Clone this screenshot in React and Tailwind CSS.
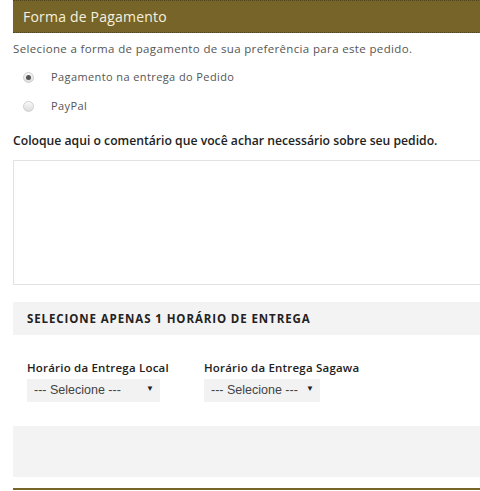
import { useState } from "react";

const Select = ({ width }) => (
  <div className="relative" style={{ width }}>
    <select
      className="w-full h-[23px] bg-[#f2f2f2] text-[12.5px] text-[#444] pl-[7px] appearance-none outline-none"
      style={{ fontFamily: "'Liberation Sans', sans-serif" }}
    >
      <option>--- Selecione ---</option>
    </select>
    <span className="absolute right-[6px] top-[6px] text-[8px] text-[#222] pointer-events-none">
      ▼
    </span>
  </div>
);

const Radio = ({ checked, onChange, label }) => (
  <label className="flex items-center gap-[17px] h-[16px] cursor-pointer">
    <input type="radio" name="pay" checked={checked} onChange={onChange} className="hidden" />
    <span className="w-[11px] h-[11px] rounded-full border border-[#d0d0d0] bg-gradient-to-b from-[#fafafa] to-[#dcdcdc] flex items-center justify-center">
      {checked && <span className="w-[5px] h-[5px] rounded-full bg-[#555]" />}
    </span>
    <span className="text-[11px] text-[#555] tracking-[0.4px]">{label}</span>
  </label>
);

const App = () => {
  const [payment, setPayment] = useState("entrega");
  const [comment, setComment] = useState("");

  return (
    <div
      className="w-[480px] h-[491px] overflow-hidden bg-white pl-[13px]"
      style={{ fontFamily: "'Open Sans', sans-serif" }}
    >
      <div className="w-[600px]">
        {/* header */}
        <div className="h-[33px] bg-[#766428] border-y border-dotted border-[#4e4319] flex items-center pl-[10px]">
          <h3 className="text-[14px] text-[#f6f1df] tracking-[0.2px]">
            Forma de Pagamento
          </h3>
        </div>

        <p className="mt-[8px] text-[11.5px] text-[#555] tracking-[0.35px] leading-[16px]">
          Selecione a forma de pagamento de sua preferência para este pedido.
        </p>

        <div className="mt-[12px] flex flex-col gap-[13px] pl-[10px]">
          <Radio
            checked={payment === "entrega"}
            onChange={() => setPayment("entrega")}
            label="Pagamento na entrega do Pedido"
          />
          <Radio
            checked={payment === "paypal"}
            onChange={() => setPayment("paypal")}
            label="PayPal"
          />
        </div>

        <p className="mt-[19px] text-[12.2px] font-semibold text-[#222] leading-[16px]">
          Coloque aqui o comentário que você achar necessário sobre seu pedido.
        </p>

        <textarea
          value={comment}
          onChange={(e) => setComment(e.target.value)}
          className="mt-[11px] block w-full h-[125px] border border-[#e2e2e2] outline-none resize-none"
        />

        <div className="mt-[17px] h-[33px] bg-[#f3f3f3] flex items-center pl-[14px]">
          <span className="text-[11.5px] font-bold text-[#222] tracking-[0.9px] uppercase">
            Selecione apenas 1 horário de entrega
          </span>
        </div>

        <div className="mt-[25px] flex pl-[14px]">
          <div className="w-[177px]">
            <div className="text-[11.5px] font-semibold text-[#222] leading-[16px] tracking-[0.2px]">
              Horário da Entrega Local
            </div>
            <Select width={133} />
          </div>
          <div>
            <div className="text-[11.5px] font-semibold text-[#222] leading-[16px] tracking-[0.2px]">
              Horário da Entrega Sagawa
            </div>
            <Select width={116} />
          </div>
        </div>

        <div className="mt-[24px] h-[51px] bg-[#f3f3f3]" />

        <div className="mt-[11px] h-[2px] bg-[#776629]" />
      </div>
    </div>
  );
};

export default App;
